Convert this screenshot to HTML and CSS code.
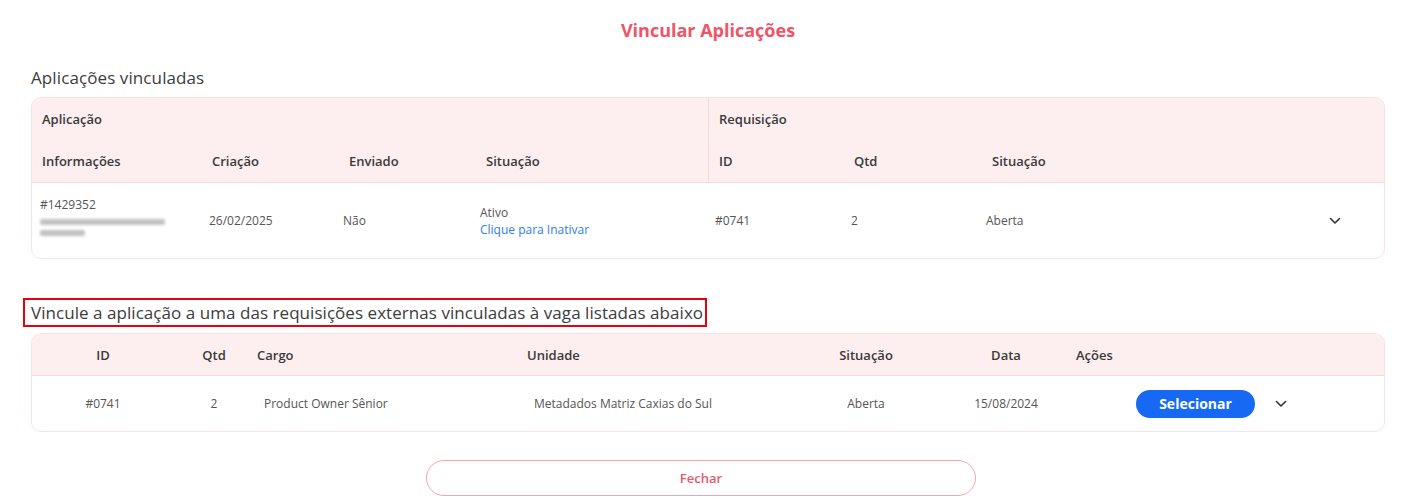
FILE: index.html
```html
<!DOCTYPE html>
<html lang="pt-BR">
<head>
<meta charset="utf-8">
<title>Vincular Aplicações</title>
<link rel="stylesheet" href="styles.css">
</head>
<body>
<div class="modal">
  <h1 class="title">Vincular Aplicações</h1>

  <h2 class="section-title">Aplicações vinculadas</h2>
  <div class="table t1">
    <div class="t1-head">
      <div class="group g-app">Aplicação</div>
      <div class="group g-req div">Requisição</div>
      <div class="th">Informações</div>
      <div class="th">Criação</div>
      <div class="th">Enviado</div>
      <div class="th">Situação</div>
      <div class="th div">ID</div>
      <div class="th">Qtd</div>
      <div class="th">Situação</div>
      <div class="th"></div>
    </div>
    <div class="t1-row">
      <div class="td info">
        <span>#1429352</span>
        <span class="blur b1"></span>
        <span class="blur b2"></span>
      </div>
      <div class="td">26/02/2025</div>
      <div class="td tight">Não</div>
      <div class="td status tight"><span>Ativo</span><a class="link">Clique para Inativar</a></div>
      <div class="td">#0741</div>
      <div class="td">2</div>
      <div class="td tight">Aberta</div>
      <div class="td chev-cell">
        <svg class="chev" width="12" height="8" viewBox="0 0 12 8"><path d="M1.5 1.5 L6 6 L10.5 1.5" fill="none" stroke="#333" stroke-width="1.6" stroke-linecap="round" stroke-linejoin="round"/></svg>
      </div>
    </div>
  </div>

  <div class="section2">
    <h2 class="section-title boxed">Vincule a aplicação a uma das requisições externas vinculadas à vaga listadas abaixo</h2>
  </div>
  <div class="table t2">
    <div class="t2-head">
      <div class="th c">ID</div>
      <div class="th c">Qtd</div>
      <div class="th l">Cargo</div>
      <div class="th l">Unidade</div>
      <div class="th c">Situação</div>
      <div class="th c">Data</div>
      <div class="th l">Ações</div>
    </div>
    <div class="t2-row">
      <div class="td c">#0741</div>
      <div class="td c">2</div>
      <div class="td l">Product Owner Sênior</div>
      <div class="td l">Metadados Matriz Caxias do Sul</div>
      <div class="td c">Aberta</div>
      <div class="td c">15/08/2024</div>
      <div class="td actions">
        <button class="btn-select">Selecionar</button>
        <svg class="chev" width="12" height="8" viewBox="0 0 12 8"><path d="M1.5 1.5 L6 6 L10.5 1.5" fill="none" stroke="#333" stroke-width="1.6" stroke-linecap="round" stroke-linejoin="round"/></svg>
      </div>
    </div>
  </div>

  <div class="footer">
    <button class="btn-close">Fechar</button>
  </div>
</div>
</body>
</html>
```

FILE: styles.css
```css
* { box-sizing: border-box; }
html, body { margin: 0; padding: 0; background: #fff; }
body {
  font-family: "Open Sans", "DejaVu Sans", sans-serif;
  color: #444;
  width: 1414px;
  height: 501px;
  overflow: hidden;
}
.modal {
  padding: 0 29px 0 31px;
}
.title {
  margin: 0;
  padding-top: 17px;
  height: 60px;
  text-align: center;
  font-size: 18px;
  font-weight: 700;
  color: #ef5469;
  line-height: 26px;
}
.section-title {
  margin: 0;
  font-size: 17px;
  letter-spacing: 0.1px;
  font-weight: 400;
  color: #3c3c3c;
  line-height: 24px;
  height: 37px;
  padding-top: 6px;
}
.table {
  border: 1px solid #fbdfe3;
  border-radius: 10px;
  overflow: hidden;
  background: #fff;
}
.th {
  font-size: 13px;
  font-weight: 600;
  color: #3a3a3a;
}
.td {
  font-size: 12px;
  color: #555;
}

/* table 1 */
.t1-head, .t1-row {
  display: grid;
  grid-template-columns: 170px 137px 137px 232px 136px 138px 1fr 80px;
}
.t1-head {
  background: #fdeef0;
  border-bottom: 1px solid #fadadf;
  grid-template-rows: 42px 42px;
}
.t1-head .group {
  display: flex;
  align-items: center;
  padding-left: 10px;
  font-size: 13px;
  font-weight: 600;
  color: #3a3a3a;
}
.g-app { grid-column: 1 / 5; }
.g-req { grid-column: 5 / 9; }
.t1-head .th {
  display: flex;
  align-items: center;
  padding-left: 10px;
}
.div { border-left: 1px solid #f5d6db; }
.t1-row { height: 75px; }
.t1-row .td {
  display: flex;
  align-items: center;
  padding-left: 7px;
}
.t1-row .tight { padding-left: 4px; }
.t1-row .info {
  flex-direction: column;
  align-items: flex-start;
  justify-content: flex-start;
  padding-left: 8px;
  padding-top: 13px;
  gap: 2px;
}
.blur {
  display: block;
  height: 6px;
  background: #a0a0a0;
  filter: blur(1.8px);
  opacity: .65;
  border-radius: 2px;
}
.b1 { width: 125px; margin-top: 4px; }
.b2 { width: 45px; margin-top: 3px; }
.t1-row .status {
  flex-direction: column;
  align-items: flex-start;
  justify-content: center;
  gap: 0;
}
.link { color: #2f7cf0; cursor: pointer; }
.t1-row .chev-cell { justify-content: flex-start; padding-left: 25px; }

/* section 2 */
.section2 { padding-top: 39px; }
.boxed {
  display: inline-block;
  margin-left: -8px;
  padding: 0 2px 0 6px;
  height: 29px;
  line-height: 25px;
  letter-spacing: 0.05px;
  border: 2px solid #e8000d;
}
.t2 { margin-top: 6px; }
.t2-head, .t2-row {
  display: grid;
  grid-template-columns: 142px 80px 270px 272px 140px 140px 1fr;
}
.t2-head {
  height: 42px;
  background: #fdeef0;
  border-bottom: 1px solid #fadadf;
}
.t2-row { height: 55px; }
.t2 .th, .t2 .td {
  display: flex;
  align-items: center;
}
.t2 .c { justify-content: center; }
.t2-head .l { padding-left: 3px; }
.t2-row .l { padding-left: 10px; }
.t2-head .th:last-child { padding-left: 0; }
.actions { padding-left: 60px; gap: 20px; }
.btn-select {
  width: 119px;
  height: 28px;
  border: none;
  border-radius: 14px;
  background: #1769f5;
  color: #fff;
  font-family: inherit;
  font-size: 14px;
  font-weight: 700;
  cursor: pointer;
}

.footer {
  display: flex;
  justify-content: center;
  padding-top: 28px;
}
.btn-close {
  width: 550px;
  height: 36px;
  border: 1.5px solid #f6a3b0;
  border-radius: 18px;
  background: #fff;
  color: #e55a70;
  font-family: inherit;
  font-size: 13px;
  font-weight: 600;
  margin-left: -14px;
}
```
